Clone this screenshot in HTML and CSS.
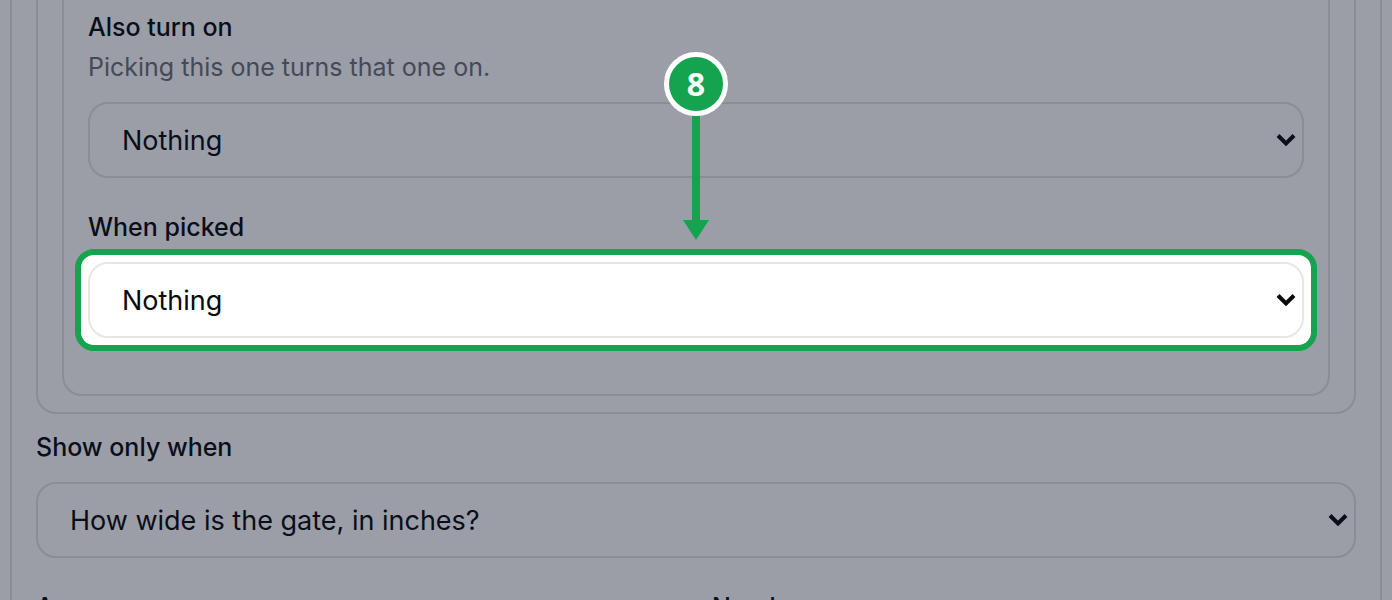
FILE: index.html
```
<!DOCTYPE html>
<html lang="en">
<head>
<meta charset="utf-8">
<meta name="viewport" content="width=device-width, initial-scale=1">
<title>Question options</title>
<link rel="stylesheet" href="styles.css">
</head>
<body>
<main class="card">
  <section class="group">
    <div class="option">
      <div class="field">
        <label class="label" for="also">Also turn on</label>
        <p class="hint" id="also-hint">Picking this one turns that one on.</p>
        <div class="picker">
          <select class="select" id="also" aria-describedby="also-hint"><option>Nothing</option></select>
          <svg class="chevron" viewBox="0 0 20 14" aria-hidden="true"><path d="M2 2.5 10 10.5 18 2.5"/></svg>
        </div>
      </div>
      <div class="field">
        <label class="label" for="when">When picked</label>
        <div class="picker picker-active">
          <select class="select" id="when"><option>Nothing</option></select>
          <svg class="chevron" viewBox="0 0 20 14" aria-hidden="true"><path d="M2 2.5 10 10.5 18 2.5"/></svg>
          <div class="callout">
            <span class="badge">8</span>
            <svg class="arrow" viewBox="0 0 26 124" aria-hidden="true"><path d="M9 0h8v104h9L13 124 0 104h9z"/></svg>
          </div>
        </div>
      </div>
    </div>
  </section>
  <div class="field">
    <label class="label" for="show">Show only when</label>
    <div class="picker">
      <select class="select" id="show"><option>How wide is the gate, in inches?</option></select>
      <svg class="chevron" viewBox="0 0 20 14" aria-hidden="true"><path d="M2 2.5 10 10.5 18 2.5"/></svg>
    </div>
  </div>
  <div class="columns">
    <span class="label">Answer</span>
    <span class="label">Needs</span>
  </div>
</main>
</body>
</html>
```
FILE: styles.css
```
:root {
  --surface: #9b9ea7;
  --line: #898d95;
  --ink: #0a0e19;
  --muted: #444a57;
  --accent: #16a350;
}
* { box-sizing: border-box; }
body {
  margin: 0;
  height: 100vh;
  overflow: hidden;
  padding: 0 10px;
  background: var(--surface);
  color: var(--ink);
  font-family: Inter, "Liberation Sans", sans-serif;
}
.card {
  min-height: 100%;
  padding: 0 24px;
  border: solid var(--line);
  border-width: 0 2px;
}
.group {
  margin-bottom: 14px;
  padding: 0 24px 16px;
  border: 2px solid var(--line);
  border-top: 0;
  border-radius: 0 0 20px 20px;
}
.option {
  display: grid;
  gap: 30px;
  padding: 8px 24px 56px;
  border: 2px solid var(--line);
  border-top: 0;
  border-radius: 0 0 20px 20px;
}
.label {
  display: block;
  font-size: 25px;
  font-weight: 500;
  line-height: 38px;
}
.hint {
  margin: 2px 0 0;
  color: var(--muted);
  font-size: 25px;
  line-height: 38px;
}
.picker {
  position: relative;
  display: grid;
  align-items: center;
  margin-top: 16px;
}
.select {
  grid-area: 1 / 1;
  appearance: none;
  width: 100%;
  height: 76px;
  padding: 0 48px 0 32px;
  border: 2px solid var(--line);
  border-radius: 20px;
  background: transparent;
  color: inherit;
  font: 400 27px Inter, "Liberation Sans", sans-serif;
}
.chevron {
  grid-area: 1 / 1;
  justify-self: end;
  width: 20px;
  height: 14px;
  margin-right: 8px;
  fill: none;
  stroke: currentColor;
  stroke-width: 4;
  pointer-events: none;
}
.picker-active { color: #0a0a0a; }
.picker-active::before {
  content: "";
  position: absolute;
  inset: -13px;
  border: 6px solid var(--accent);
  border-radius: 19px;
  background: #fff;
}
.picker-active .select {
  position: relative;
  border-color: #e5e7e7;
}
.picker-active .chevron { position: relative; }
.callout {
  position: absolute;
  bottom: calc(100% + 22px);
  left: 50%;
  transform: translateX(-50%);
  display: flex;
  flex-direction: column;
  align-items: center;
}
.badge {
  display: grid;
  place-items: center;
  width: 64px;
  height: 64px;
  border: 5px solid #fff;
  border-radius: 50%;
  background: var(--accent);
  color: #fff;
  font: 700 32px/1 "Noto Sans", "Open Sans", sans-serif;
}
.arrow {
  width: 26px;
  height: 124px;
  fill: var(--accent);
}
.columns {
  display: grid;
  grid-template-columns: 1fr 1fr;
  gap: 32px;
  margin-top: 30px;
}
```
